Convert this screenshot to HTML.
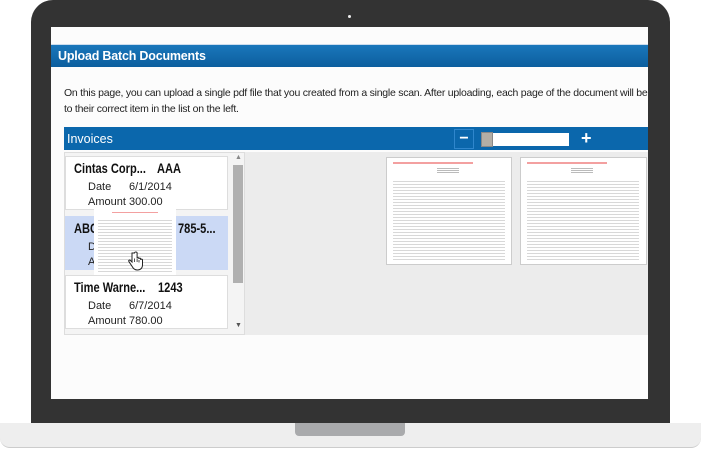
<!DOCTYPE html><html><head><style>
*{margin:0;padding:0;box-sizing:border-box}
body{width:701px;height:450px;background:#fff;position:relative;overflow:hidden;font-family:"Liberation Sans",sans-serif}
.a{position:absolute}
.doc{background:#fff;border:1px solid #ccc;position:absolute}
.lines{background:repeating-linear-gradient(#fff 0 1px,#d8d8d8 1px 2px,#fff 2px 3px)}
.card{position:absolute;left:14px;width:163px;height:54px;background:#fff;border:1px solid #ddd;color:#111;white-space:nowrap}
.card b{position:absolute;left:8px;top:4px;font-size:13.5px;font-weight:bold;transform:scaleX(.82);transform-origin:left}
.card span{position:absolute;font-size:11px;color:#222}
#scr{position:absolute;left:51px;top:27px;width:597px;height:372px;background:#fcfcfc;overflow:hidden}
</style></head><body>
<div class="a" style="left:0;top:423px;width:701px;height:25px;background:#eeeeee;border-radius:0 0 10px 10px;border-bottom:1px solid #ccc"></div>
<div class="a" style="left:295px;top:423px;width:110px;height:13px;background:#a9aaac;border-radius:0 0 4px 4px"></div>
<div class="a" style="left:31px;top:0;width:639px;height:423px;background:#333;border-radius:22px 22px 0 0"></div>
<div class="a" style="left:348px;top:15px;width:3px;height:3px;background:#eee;border-radius:50%"></div>
<div id="scr">
<div class="a" style="left:0;top:17px;width:597px;height:1px;background:#cde"></div>
<div class="a" style="left:0;top:18px;width:597px;height:22px;background:linear-gradient(#1a77bb,#0c5e9e);color:#fff;font-weight:bold;font-size:12.5px;line-height:22px;padding-left:7px;letter-spacing:-0.2px">Upload Batch Documents</div>
<div class="a" style="left:13px;top:59px;width:700px;font-size:10.5px;line-height:15.5px;color:#222;white-space:nowrap;letter-spacing:-0.25px">On this page, you can upload a single pdf file that you created from a single scan. After uploading, each page of the document will be<br>to their correct item in the list on the left.</div>
<div class="a" style="left:13px;top:100px;width:584px;height:23px;background:#0b67ac;color:#fff;font-size:12.5px;line-height:25px;padding-left:3px">Invoices</div>
<div class="a" style="left:403px;top:102px;width:20px;height:20px;border:1px solid #2f86cc;color:#fff;font-weight:bold;font-size:16px;line-height:17px;text-align:center">−</div>
<div class="a" style="left:430px;top:106px;width:88px;height:13px;background:#fff"></div>
<div class="a" style="left:430px;top:105px;width:12px;height:15px;background:#b3aea6;border:1px solid #888"></div>
<div class="a" style="left:530px;top:101px;color:#fff;font-weight:bold;font-size:18px;line-height:20px">+</div>
<div class="a" style="left:13px;top:125px;width:181px;height:183px;background:#f4f4f4;border:1px solid #ddd"></div>
<div class="a" style="left:194px;top:125px;width:403px;height:183px;background:#ececec"></div>
<div class="a" style="left:182px;top:138px;width:10px;height:118px;background:#b0b0b0"></div>
<div class="a" style="left:184px;top:127px;font-size:7px;color:#888">▲</div>
<div class="a" style="left:184px;top:295px;font-size:7px;color:#555">▼</div>
<div class="card" style="top:129px"><b>Cintas Corp...</b><b style="left:91px">AAA</b><span style="left:22px;top:24px">Date</span><span style="left:63px;top:24px">6/1/2014</span><span style="left:22px;top:39px">Amount</span><span style="left:63px;top:39px">300.00</span></div>
<div class="card" style="top:189px;background:#cbd9f5;border-color:#cbd9f5"><b>ABC</b><b style="left:112px">785-5...</b><span style="left:22px;top:24px">D</span><span style="left:22px;top:39px">A</span></div>
<div class="card" style="top:248px"><b>Time Warne...</b><b style="left:92px">1243</b><span style="left:22px;top:24px">Date</span><span style="left:63px;top:24px">6/7/2014</span><span style="left:22px;top:39px">Amount</span><span style="left:63px;top:39px">780.00</span></div>
<div class="a" style="left:43px;top:182px;width:82px;height:66px;background:#fff"><div class="a" style="left:18px;top:3px;width:46px;height:1px;background:#f3a0a0"></div><div class="lines a" style="left:4px;top:10px;width:74px;height:54px"></div>
<svg class="a" style="left:34px;top:42px" width="16" height="20" viewBox="0 0 16 20"><path d="M4 2v9l-1.5-1.5c-1-1-2.5 0-1.5 1.2L4.5 16c1 2 2.5 3 5 3 3 0 5-2 5-5V9c0-1.2-1.8-1.2-1.8 0V8c0-1.2-1.8-1.2-1.8 0V7.5c0-1.2-1.8-1.2-1.8 0V2c0-1.3-2.6-1.3-2.6 0z" fill="#fff" stroke="#222" stroke-width="1"/><path d="M6.6 7.5V11M9.1 8v3M11 9v2.5" stroke="#222" stroke-width=".8"/></svg></div>
<div class="doc" style="left:335px;top:130px;width:126px;height:108px"><div class="a" style="left:6px;top:4px;width:80px;height:2px;background:#f3a0a0"></div><div class="a" style="left:50px;top:9px;width:22px;height:6px;background:repeating-linear-gradient(#fff 0 1px,#bbb 1px 2px)"></div><div class="a lines" style="left:6px;top:22px;width:112px;height:80px"></div></div>
<div class="doc" style="left:469px;top:130px;width:127px;height:108px"><div class="a" style="left:6px;top:4px;width:80px;height:2px;background:#f3a0a0"></div><div class="a" style="left:50px;top:9px;width:22px;height:6px;background:repeating-linear-gradient(#fff 0 1px,#bbb 1px 2px)"></div><div class="a lines" style="left:6px;top:22px;width:112px;height:80px"></div></div>
</div>
</body></html>
